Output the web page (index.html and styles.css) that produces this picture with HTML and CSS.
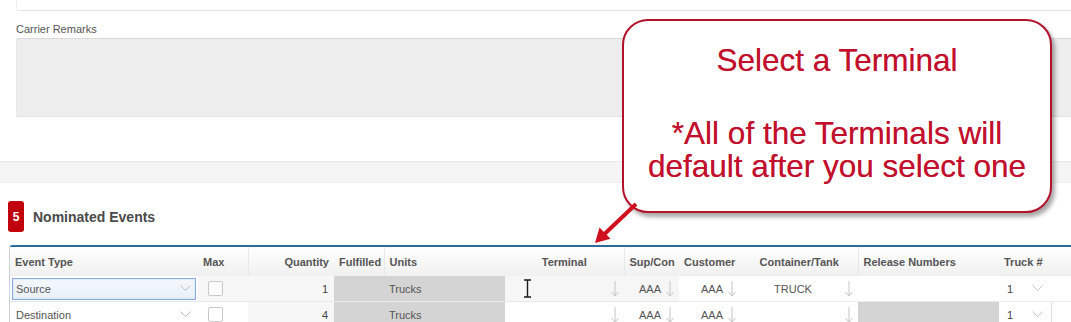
FILE: index.html
```html
<!DOCTYPE html>
<html>
<head>
  <title>Nominated Events</title>
  <link rel="stylesheet" href="styles.css">
</head>
<body>
  <div class="top-box"></div>

  <div class="remarks">
    <label class="field-label">Carrier Remarks</label>
    <div class="textarea"></div>
  </div>

  <div class="band"></div>

  <section class="events">
    <div class="section-title">
      <span class="badge">5</span>
      <h3>Nominated Events</h3>
    </div>

    <div class="grid-wrap">
      <table class="grid">
        <colgroup>
          <col style="width:188px"><col style="width:50px"><col style="width:86px"><col style="width:50px">
          <col style="width:121px"><col style="width:119px"><col style="width:55px"><col style="width:62px">
          <col style="width:117px"><col style="width:141px"><col style="width:52px"><col style="width:40px">
        </colgroup>
        <thead>
          <tr>
            <th>Event Type</th>
            <th class="sep">Max</th>
            <th class="right">Quantity</th>
            <th class="sep">Fulfilled</th>
            <th>Units</th>
            <th class="center sep">Terminal</th>
            <th>Sup/Con</th>
            <th>Customer</th>
            <th class="center sep">Container/Tank</th>
            <th>Release Numbers</th>
            <th>Truck #</th>
            <th></th>
          </tr>
        </thead>
        <tbody>
          <tr>
            <td class="event">
              <div class="select focused">
                <span>Source</span>
                <svg class="chev" width="11" height="7" viewBox="0 0 11 7"><polyline points="0.5,0.5 5.5,5.5 10.5,0.5" fill="none" stroke="#bcbcbc"/></svg>
              </div>
            </td>
            <td class="max soft"><span class="checkbox"></span></td>
            <td class="qty">1</td>
            <td class="locked"></td>
            <td class="locked">Trucks</td>
            <td class="soft">
              <div class="picker"><span class="grow"></span>
                <svg width="8" height="16" viewBox="0 0 8 16"><path d="M4 0V15M0.5 11L4 15L7.5 11" fill="none" stroke="#c4c4c4"/></svg>
              </div>
            </td>
            <td class="soft">
              <div class="picker"><span class="grow right">AAA</span>
                <svg width="8" height="16" viewBox="0 0 8 16"><path d="M4 0V15M0.5 11L4 15L7.5 11" fill="none" stroke="#c4c4c4"/></svg>
              </div>
            </td>
            <td>
              <div class="picker"><span class="grow right">AAA</span>
                <svg width="8" height="16" viewBox="0 0 8 16"><path d="M4 0V15M0.5 11L4 15L7.5 11" fill="none" stroke="#c4c4c4"/></svg>
              </div>
            </td>
            <td>
              <div class="picker"><span class="grow center">TRUCK</span>
                <svg width="8" height="16" viewBox="0 0 8 16"><path d="M4 0V15M0.5 11L4 15L7.5 11" fill="none" stroke="#c4c4c4"/></svg>
              </div>
            </td>
            <td></td>
            <td class="truck">
              <div class="select plain"><span>1</span>
                <svg class="chev" width="11" height="7" viewBox="0 0 11 7"><polyline points="0.5,0.5 5.5,5.5 10.5,0.5" fill="none" stroke="#c8c8c8"/></svg>
              </div>
            </td>
            <td></td>
          </tr>
          <tr>
            <td class="event">
              <div class="select">
                <span>Destination</span>
                <svg class="chev" width="11" height="7" viewBox="0 0 11 7"><polyline points="0.5,0.5 5.5,5.5 10.5,0.5" fill="none" stroke="#bcbcbc"/></svg>
              </div>
            </td>
            <td class="max"><span class="checkbox"></span></td>
            <td class="qty">4</td>
            <td class="locked"></td>
            <td class="locked">Trucks</td>
            <td>
              <div class="picker"><span class="grow"></span>
                <svg width="8" height="16" viewBox="0 0 8 16"><path d="M4 0V15M0.5 11L4 15L7.5 11" fill="none" stroke="#c4c4c4"/></svg>
              </div>
            </td>
            <td>
              <div class="picker"><span class="grow right">AAA</span>
                <svg width="8" height="16" viewBox="0 0 8 16"><path d="M4 0V15M0.5 11L4 15L7.5 11" fill="none" stroke="#c4c4c4"/></svg>
              </div>
            </td>
            <td>
              <div class="picker"><span class="grow right">AAA</span>
                <svg width="8" height="16" viewBox="0 0 8 16"><path d="M4 0V15M0.5 11L4 15L7.5 11" fill="none" stroke="#c4c4c4"/></svg>
              </div>
            </td>
            <td>
              <div class="picker"><span class="grow center"></span>
                <svg width="8" height="16" viewBox="0 0 8 16"><path d="M4 0V15M0.5 11L4 15L7.5 11" fill="none" stroke="#c4c4c4"/></svg>
              </div>
            </td>
            <td class="locked"></td>
            <td class="truck">
              <div class="select plain"><span>1</span>
                <svg class="chev" width="11" height="7" viewBox="0 0 11 7"><polyline points="0.5,0.5 5.5,5.5 10.5,0.5" fill="none" stroke="#c8c8c8"/></svg>
              </div>
            </td>
            <td class="boxed"></td>
          </tr>
        </tbody>
      </table>
    </div>
  </section>

  <!-- tutorial overlay -->
  <div class="callout">
    <p>Select a Terminal</p>
    <p class="gap">*All of the Terminals will<br>default after you select one</p>
  </div>

  <svg class="pointer" width="56" height="52" viewBox="0 0 56 52">
    <line x1="48" y1="6" x2="16" y2="36.5" stroke="#d0101f" stroke-width="4"/>
    <polygon points="7,45 11.5,29.5 22.5,40.8" fill="#d0101f"/>
  </svg>

  <svg class="ibeam" width="9" height="19" viewBox="0 0 9 19">
    <path d="M1 1H8M4.5 1V18M1 18H8" fill="none" stroke="#1a1a1a" stroke-width="1.4"/>
  </svg>
</body>
</html>
```

FILE: styles.css
```css
body {
  margin: 0;
  font-family: "Liberation Sans", Arial, sans-serif;
  background-color: #fff;
  color: #555;
  overflow: hidden;
  position: relative;
}

.top-box {
  margin-left: 16px;
  height: 10px;
  border-bottom: 1px solid #e3e3e3;
  border-left: 1px solid #f0f0f0;
  border-bottom-left-radius: 3px;
}

.remarks {
  padding-left: 16px;
}

.field-label {
  display: block;
  margin-top: 12px;
  font-size: 11px;
  line-height: 13px;
  color: #555;
}

.textarea {
  margin-top: 2px;
  height: 77px;
  background-color: #ededed;
  border-top: 1px solid #dadada;
  border-bottom: 1px solid #e2e2e2;
  border-left: 1px solid #e6e6e6;
  border-radius: 2px 0 0 2px;
}

.band {
  margin-top: 44px;
  height: 20px;
  background-color: #f5f5f5;
  border-top: 1px solid #e8e8e8;
  border-bottom: 1px solid #efefef;
}

.section-title {
  display: flex;
  align-items: center;
  gap: 9px;
  margin-top: 18px;
  padding-left: 8px;
  height: 31px;
}

.badge {
  width: 16px;
  height: 31px;
  background-color: #c0000c;
  border-radius: 3px;
  color: #fff;
  font-size: 12px;
  font-weight: bold;
  display: flex;
  align-items: center;
  justify-content: center;
}

.section-title h3 {
  margin: 0;
  font-size: 14px;
  font-weight: bold;
  color: #4a4a4a;
}

.grid-wrap {
  margin-top: 13px;
  margin-left: 9px;
  width: 1100px;
  border-top: 2px solid #2f6b9f;
  border-left: 1px solid #c9d3dc;
  border-top-left-radius: 4px;
}

.grid {
  table-layout: fixed;
  width: 1041px;
  border-collapse: collapse;
  font-size: 11px;
}

.grid th {
  height: 29px;
  padding: 0 5px;
  text-align: left;
  font-weight: bold;
  color: #555;
  background: linear-gradient(#ffffff, #f0f0f0);
  white-space: nowrap;
}

.grid th.sep {
  border-right: 1px solid #e8e8e8;
}

.grid th.right {
  text-align: right;
}

.grid th.center {
  text-align: center;
}

.grid td {
  height: 25px;
  padding: 0 5px;
  border-bottom: 1px solid #e9e9e9;
  color: #555;
  white-space: nowrap;
}

.grid td.event {
  padding: 0 2px;
}

.grid td.max {
  padding-left: 10px;
}

.grid td.qty {
  text-align: right;
  padding-right: 6px;
  background-color: #f7f7f7;
  color: #444;
}

.grid td.locked {
  background-color: #d4d4d4;
}

.grid td.soft {
  background-color: #f6f6f6;
}

.grid td.boxed {
  border-left: 1px solid #dcdcdc;
}

.grid td.truck {
  padding-left: 7px;
}

.select {
  display: flex;
  align-items: center;
  justify-content: space-between;
  height: 22px;
  padding: 0 4px 0 3px;
  box-sizing: border-box;
  border: 1px solid transparent;
}

.select.focused {
  border-color: #86aee2;
  background: linear-gradient(#f4f8fd, #e9f0f9);
  box-shadow: inset 0 0 2px rgba(80, 130, 200, 0.25);
}

.select.plain {
  padding: 0;
  width: 38px;
  color: #444;
}

.checkbox {
  display: block;
  width: 13px;
  height: 13px;
  border: 1px solid #c9c9c9;
  border-radius: 2px;
  background-color: #fff;
}

.picker {
  display: flex;
  align-items: center;
  gap: 5px;
}

.picker .grow {
  flex: 1;
}

.picker .right {
  text-align: right;
}

.picker .center {
  text-align: center;
}

.callout {
  position: absolute;
  left: 622px;
  top: 19px;
  width: 430px;
  height: 194px;
  box-sizing: border-box;
  padding-top: 23px;
  background-color: #fff;
  border: 2px solid #b3122b;
  border-radius: 26px;
  box-shadow: 3px 4px 4px rgba(0, 0, 0, 0.35);
  text-align: center;
  font-family: "Liberation Sans", Arial, sans-serif;
  font-size: 31.5px;
  line-height: 33px;
  color: #c20f2b;
  text-shadow: 0 0 0.6px rgba(190, 15, 40, 0.7);
}

.callout p {
  margin: 0;
}

.callout p.gap {
  margin-top: 40px;
}

.pointer {
  position: absolute;
  left: 588px;
  top: 198px;
}

.ibeam {
  position: absolute;
  left: 523px;
  top: 279px;
}
```
